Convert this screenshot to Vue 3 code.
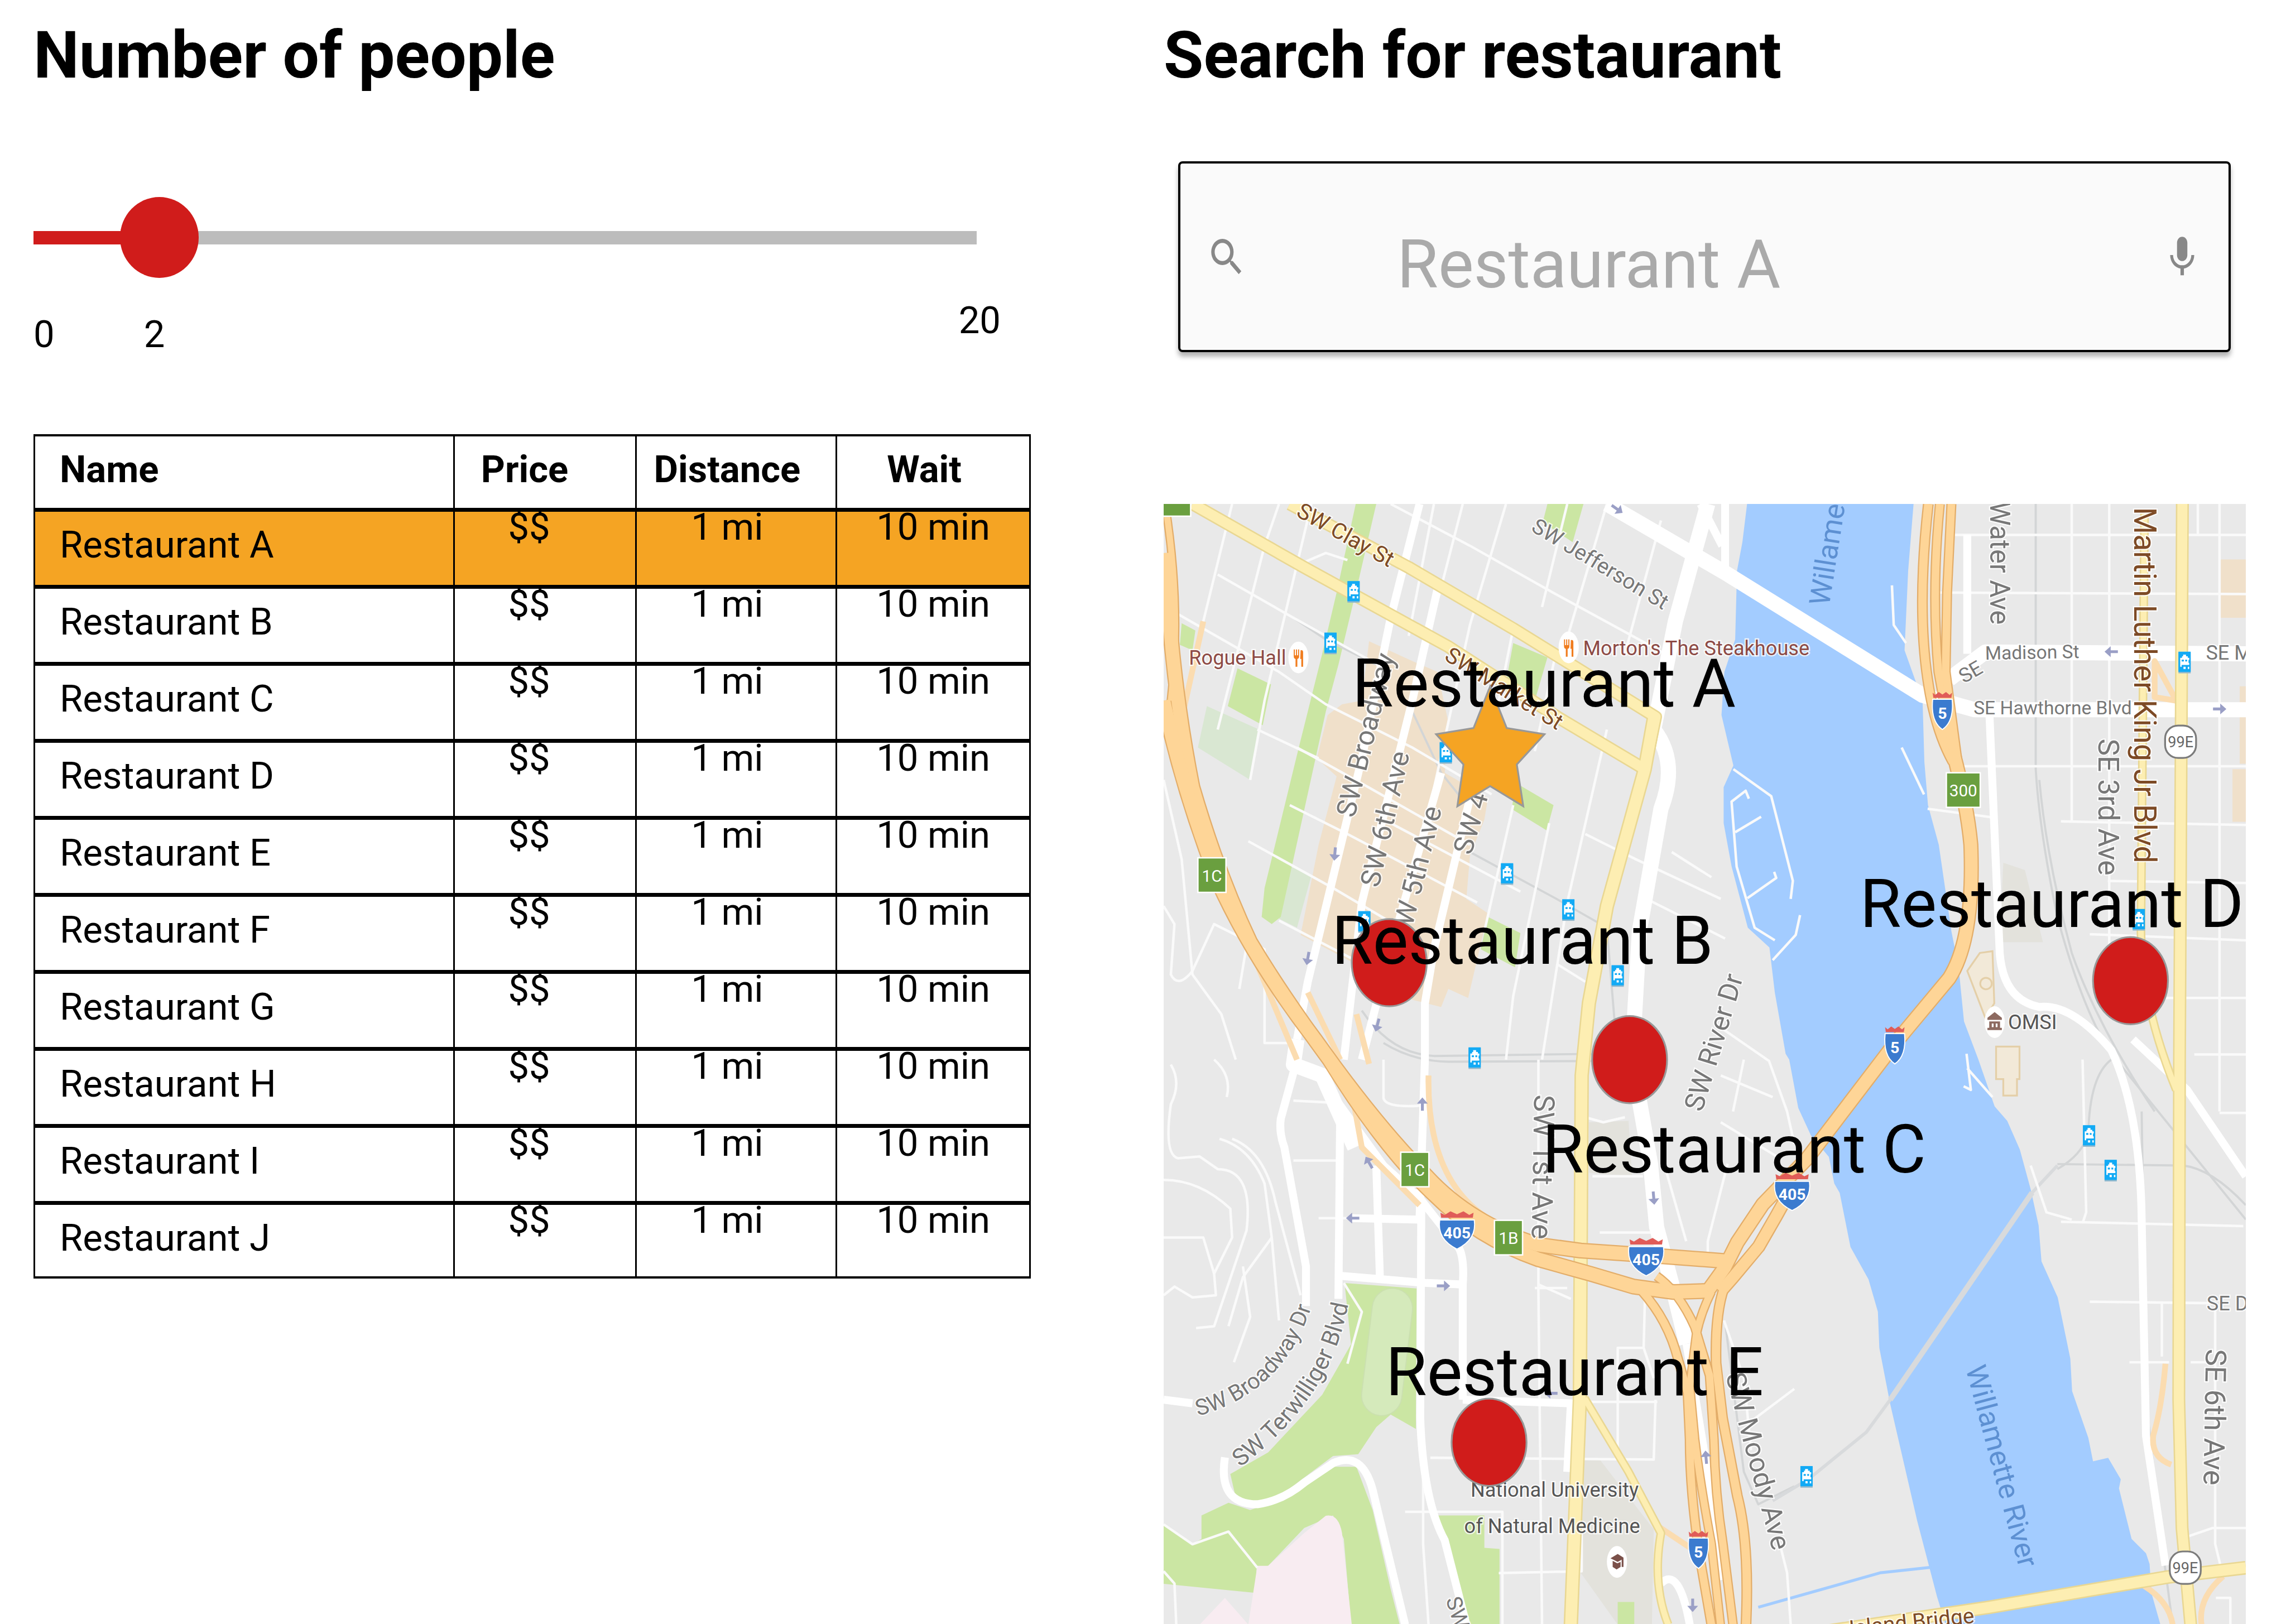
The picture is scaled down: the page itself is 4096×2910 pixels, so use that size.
<script setup>
import { ref } from 'vue'

const people = ref(2)
const query = ref('Restaurant A')

const restaurants = ['A', 'B', 'C', 'D', 'E', 'F', 'G', 'H', 'I', 'J'].map((letter) => ({
  name: `Restaurant ${letter}`,
  price: '$$',
  distance: '1 mi',
  wait: '10 min',
}))
const selected = 'Restaurant A'

// Map canvas: origin and extent of the drawing's coordinate system
const map = { x: 10, y: 14, w: 3003, h: 3110 }

const labels = [
  { text: 'Restaurant A', x: 533, y: 424 },
  { text: 'Restaurant B', x: 476, y: 1138 },
  { text: 'Restaurant C', x: 1061, y: 1717 },
  { text: 'Restaurant D', x: 1942, y: 1036 },
  { text: 'Restaurant E', x: 626, y: 2335 },
]
const place = (l) => ({
  left: `${((l.x - map.x) / map.w) * 100}%`,
  top: `${((l.y - map.y) / map.h) * 100}%`,
})

const dots = [[636, 1287], [1303, 1556], [2693, 1337], [913, 2618]]

const parks = [
  '543,14 600,14 550,230 495,460 460,590 335,1160 310,1180 282,1160 290,1080 385,690 450,430 490,260',
  '1075,14 1175,14 1145,120 1062,65',
  '980,400 1075,440 1040,560 960,510',
  '215,470 308,515 285,628 188,575',
  '60,345 98,365 90,420 55,405',
  '990,790 1092,850 1073,920 975,860',
  '910,1160 1000,1205 985,1300 890,1250',
  '512,2176 712,2191 710,2581 640,2541 600,2576 550,2651 480,2656 360,2746 290,2791 210,2771 195,2706 300,2646 450,2486 530,2346',
  '115,2821 190,2786 250,2806 340,2776 480,2686 545,2686 590,2806 640,3026 665,3124 530,3124 510,2886 480,2821 400,2856 300,2961 268,2966 265,3036 10,3011 10,2846 90,2901 115,2886',
  '770,2821 900,2821 900,2911 942,2914 942,3124 855,3124',
  '1270,3061 1316,3061 1316,3124 1270,3124',
]
const paleParks = ['130,575 275,640 250,780 105,690', '360,1020 420,1045 380,1190 330,1165']
const beige = [
  '505,570 560,560 580,395 700,450 770,480 800,620 790,760 910,830 900,890 860,990 850,1110 910,1150 855,1385 800,1360 780,1410 700,1390 560,1300 390,1210 440,960 490,770 435,720 465,600',
  '2940,168 3013,168 3013,330 2940,330',
  '2996,520 3013,520 3013,735 2996,735',
  '2976,750 3013,750 3013,896 2976,896',
]
const river =
  '1629,14 1616,120 1601,200 1596,390 1566,480 1558,600 1591,740 1564,800 1564,900 1586,1020 1631,1190 1691,1245 1706,1370 1736,1540 1746,1556 1771,1690 1806,1766 1856,1826 1871,1900 1886,1926 1916,2076 1966,2166 1992,2256 1996,2356 2026,2511 2101,2836 2156,3046 2180,3124 2776,3124 2751,3036 2746,2956 2736,2926 2696,2886 2661,2746 2666,2721 2631,2661 2589,2671 2576,2606 2531,2476 2526,2386 2491,2216 2446,2116 2438,2016 2416,1916 2386,1806 2351,1726 2316,1686 2271,1556 2231,1450 2216,1300 2196,1200 2161,960 2131,850 2121,730 2116,560 2066,420 2076,200 2091,14'

const minor = [
  // west side blocks
  'M200 14L120 340L60 600', 'M330 14L290 130L160 640M420 14L290 560L250 780', 'M160 210L370 330L640 480M50 320L330 480L460 570L700 690L920 820',
  'M270 640L440 720M640 14L860 130L1090 260L1420 440', 'M300 130L390 180L460 150L520 170', 'M840 14L740 400M960 14L860 350L800 620L700 1080',
  'M1130 14L1060 300M1240 14L1120 420M1390 60L1290 430', 'M980 360L900 760M1100 420L1040 700M1240 640L1130 1120L1060 1556', 'M380 690L560 790L860 960',
  'M360 850L520 930L880 1120M245 950L480 1080L700 1210', 'M640 900L1000 1090', 'M1080 900L980 1380L960 1556M980 850L900 1200', 'M330 1170L560 1290',
  'M10 780L60 1000L90 1320L170 1430L210 1556', 'M10 1130L40 1180L30 1320Q50 1360 90 1310L150 1180L290 1250L290 1510L380 1510M240 1240L220 1360',
  'M1180 930L1320 1000L1556 1110M1420 980L1530 1050M1100 1290L1180 1340', 'M1350 1110L1568 1220', 'M760 14L690 380',
  'M1050 1556L1050 2200L1060 3124', 'M1180 1716L1230 1730L1290 1716', 'M1220 2036L1370 2036M1200 1880L1340 1880', 'M1050 2180L1140 2220M1040 2190L1130 2190',
  'M750 2661L1370 2666L1375 2500M940 2506L1380 2506M680 2811L950 2811L950 3124', 'M940 2981L1170 2976L1170 2850', 'M1346 2200L1342 2356L1270 2356L1270 2660M1342 2356L1370 2440',
  'M730 2580L730 2900L745 3124', 'M1575 1845L1520 2060L1520 2090', 'M1460 2060L1400 1850',
  // south-west hills
  'M30 1570Q60 1620 30 1680Q10 1820 50 1830L110 1825L160 1860Q260 1860 240 2030L150 2296L100 2301', 'M10 1890Q110 1890 195 1970L200 2050L150 2150L155 2210L90 2216L40 2186L10 2210',
  'M10 2050L120 2050L150 2150M165 1776Q250 1800 290 1900L310 2050L230 2160L190 2296', 'M200 1776Q290 1810 320 1950L390 2210', 'M310 2050L330 2280M230 2130L250 2270L205 2396', 'M150 1556Q200 1600 185 1660',
  'M370 1670L490 1676M370 1836L490 1836M440 1996L720 1996', 'M10 2846L90 2901L190 2866L270 2966', 'M10 2976L40 3010L45 3124',
  'M620 1556L620 1660Q620 1690 720 1684', 'M510 2176L560 2256L520 2400',
  // east side
  'M2200 100L3013 100M2150 260L3013 264M2200 742L3013 742M2500 895L3013 905M2630 1060L3013 1066M2580 1208L3013 1225M2660 1385L3013 1385M2870 1542L3013 1542',
  'M2530 14L2530 895M2634 14L2634 1300M2940 14L2940 1700M2880 14L2880 100', 'M2560 1556L2570 1980L2560 2010M2500 2006L3006 2018M2580 2228L2920 2232M2690 2396L2800 2396M2928 2250L2928 2900L2945 2970M2860 2396L2930 2396',
  'M2940 1704L3013 1704', 'M2780 2230L2780 2380M2850 2880L2920 2856L3013 2856M2930 3050L2970 3050L2970 3124', 'M2130 860L2320 885',
  'M1620 1556L1590 1700M1556 1600L1700 1660M1640 2560L1760 2470',
  'M1560 1470L1690 1560L1740 1700L1760 1790', 'M1556 1730L1720 1830', 'M2416 1850L2460 1980L2530 2000', 'M1750 3124L1740 2980L1720 2900', 'M1565 2280L1620 2440L1640 2640',
  // marina
  'M1591 750L1696 825L1756 1060L1750 1110', 'M1634 832L1625 810L1586 840L1600 1020L1650 1190L1706 1225', 'M1596 925L1668 882', 'M1630 1108L1710 1052L1704 1035', 'M1776 1155L1764 1210L1700 1280', 'M2031 240L2036 350L2070 400', 'M2058 690L2120 820',
  'M2238 1540L2250 1640L2230 1630M2240 1580L2310 1660',
]
const medium = [
  'M720 14L640 330L560 720L410 1340L380 1500', 'M770 250L700 560L560 1120L510 1556', 'M860 830L760 1250L735 1400L735 1556L720 2000', 'M780 760L640 1250L560 1556',
  'M380 1556L335 1720Q330 1760 345 1800L405 2130L405 2240', 'M440 1600L620 1850L720 1940L830 2080Q845 2110 840 2180L840 2500', 'M500 1680L495 2220', 'M600 1850L610 2160',
  'M500 2156L740 2176L840 2180', 'M725 1950L722 2550Q730 2780 790 2890L850 3124', 'M10 2500L90 2510', 'M530 1996L720 2000M840 2500L1140 2510L1130 2700',
  'M180 2660Q160 2790 270 2790Q340 2780 400 2730L480 2676Q560 2640 590 2750L680 3124', 'M2300 560L2330 1260Q2340 1390 2440 1410Q2530 1400 2640 1530Q2720 1700 2724 2000L2736 2600L2790 2960',
  'M2240 100L2240 430', 'M2700 1500L2850 1640L3013 1880', 'M1500 14L1560 130M1568 14L1568 200', 'M1390 3010Q1440 2960 1470 3124', 'M1461 2345L1514 2669L1560 3000',
]
const major = [
  'M1240 14L1568 205L2116 545L2260 585L3013 585', 'M2190 500L2290 425L3013 430', 'M1520 14L1430 340L1370 640Q1440 730 1390 860L1330 1200L1310 1556L1361 1845L1378 2021L1425 2198L1461 2345',
  'M380 1500L370 1570L450 1600L540 1800',
]
const rail = [
  'M2430 14L2430 750Q2440 920 2490 1160Q2560 1420 2640 1540L3013 2000', 'M2440 780Q2460 1000 2530 1260Q2600 1460 2760 1700', 'M2640 1556Q2580 1600 2576 1760Q2560 1820 2490 1860', 'M2490 1846L2840 1850Q2920 1860 3013 1960',
  'M700 590L780 760L860 860M860 980L1100 1110L1240 1190L1270 1556', 'M560 1420Q640 1540 760 1546L1200 1540M620 1510Q700 1560 800 1562L1200 1560', 'M2724 1700L2736 2500L2780 2900L2810 3124', 'M1570 2300L1620 2700L1660 2790L1760 2740', 'M370 330L460 390L600 460',
]
const yellow = [
  ['M360 14L690 190L980 360L1375 605L1345 750', 36], ['M90 14L400 190L800 410L1110 610L1345 750', 36],
  ['M1372 600L1345 750L1240 1130L1190 1400L1170 1600L1165 2500L1140 3124', 40], ['M1178 2496L1300 2700L1390 2870Q1365 3010 1410 3124', 24],
  ['M2732 40L2722 1200Q2722 1400 2820 1640', 24], ['M2837 14L2829 1556L2827 2500L2836 2856L2860 3124', 36], ['M1800 3150L2300 3076L2796 2992L3013 2966', 38],
]
const ramps = [
  'M120 340L60 610M380 1556L260 1270M410 1370L500 1556M580 1568L545 1430', 'M745 1600Q740 1880 900 1990', 'M540 1690L560 1800L720 1960', 'M2790 2400Q2780 2520 2756 2600Q2750 2660 2806 2680', 'M2760 450L2820 560L2760 550Z', 'M2730 3016Q2800 3060 2810 3124M2950 2990Q2880 3050 2890 3124', 'M1380 2850L1470 2910',
]
const highways = [
  ['M14 14Q60 300 30 560', 24], ['M14 150Q30 500 90 800Q160 1040 250 1230Q340 1380 470 1556Q620 1800 760 1930Q880 2050 1049 2110L1196 2151L1314 2186L1425 2201L1520 2198', 44],
  ['M10 560Q60 800 160 1060Q260 1280 430 1500Q600 1740 740 1880Q860 2010 1049 2070L1167 2086L1343 2098L1568 2115', 44],
  ['M1337 2198Q1410 2280 1437 2386L1464 2480L1470 2610Q1470 2760 1500 2950L1530 3124', 28], ['M1378 2157Q1440 2200 1484 2298L1525 2433L1537 2610Q1540 2760 1562 2900L1590 3124', 27],
  ['M1530 2200Q1500 2260 1488 2320L1470 2463L1484 2610Q1500 2740 1530 2900L1555 3124', 26],
  ['M1565 2190Q1540 2260 1543 2398L1561 2551L1602 2767Q1636 2900 1626 3124', 30],
  ['M1555 2200L1590 2160L1661 2075L1710 1990L1760 1900', 38], ['M1520 2198L1567 2133L1602 2063L1673 1957L1796 1830L2040 1510L2190 1330Q2260 1220 2250 960Q2240 850 2200 700L2170 560', 42],
  ['M2132 14Q2100 300 2130 500Q2150 640 2200 730', 30], ['M2164 14Q2140 260 2160 480L2200 700', 28], ['M2196 14L2184 260L2180 480L2220 780', 28],
]

const stops = [[537, 256], [473, 399], [793, 703], [963, 1039], [1133, 1139], [567, 1172], [1270, 1322], [873, 1550], [2843, 452], [2716, 1166], [2578, 1766], [2638, 1862], [1794, 2712]]
const shields = [['5', 2171, 588, 1], ['5', 2039, 1516, 1], ['5', 1494, 2916, 1], ['405', 824, 2029, 2], ['405', 1349, 2103, 2], ['405', 1754, 1922, 2]]
const exits = [['', 46, 0, 78], ['1C', 144, 1044, 78], ['300', 2229, 808, 94], ['1C', 707, 1861, 78], ['1B', 967, 2050, 78]]
const routes = [[2832, 674], [2845, 2966]]
const arrows = [[485, 985, 95], [410, 1275, 100], [603, 1460, 105], [728, 1680, -90], [580, 1842, -120], [535, 1996, 180], [786, 2184, 0], [1370, 1940, 85], [1085, 2482, 180], [1515, 2660, -95], [1478, 3070, 90], [2640, 424, 180], [2940, 583, 0], [1268, 28, 35]]

const streets = [
  ['SW Clay St', 515, 100, 29, 62, 'brown'], ['SW Market St', 955, 526, 32, 62, 'brown'], ['SW Jefferson St', 1222, 180, 31, 60, ''],
  ["Morton's The Steakhouse", 1488, 414, 0, 56, 'place'], ['Rogue Hall', 215, 440, 0, 56, 'place'],
  ['SW Broadway', 570, 655, -76, 76, ''], ['SW 6th Ave', 624, 888, -77, 76, ''], ['SW 5th Ave', 710, 1040, -76, 76, ''], ['SW 4', 862, 900, -74, 76, ''],
  ['SW River Dr', 1536, 1508, -73, 76, ''], ['SW 1st Ave', 1062, 1854, 91, 80, ''], ['National University', 1095, 2750, 0, 56, 'dark'], ['of Natural Medicine', 1088, 2850, 0, 56, 'dark'],
  ['OMSI', 2421, 1452, 0, 56, 'dark'], ['Willame', 1852, 154, -81, 80, 'water'], ['Willamette River', 2336, 2684, 75, 80, 'water'],
  ['Water Ave', 2330, 178, 90, 76, ''], ['Martin Luther King Jr Blvd', 2732, 517, 90, 86, 'brown'], ['SE 3rd Ave', 2631, 855, 90, 80, ''],
  ['SE', 2249, 480, -30, 56, ''], ['Madison St', 2420, 426, -1, 52, ''], ['SE Hawthorne Blvd', 2477, 580, 0, 52, ''], ['SE M', 2966, 426, 0, 56, ''], ['SE D', 2962, 2232, 0, 56, ''],
  ['SE 6th Ave', 2926, 2548, 91, 80, ''], ['SW Moody Ave', 1660, 2670, 75, 76, ''], ['Ross Island Bridge', 2012, 3124, -6, 60, 'brown'], ['SW', 826, 3090, 72, 60, ''],
]
</script>

<template>
  <main class="page">
    <section class="column">
      <h1 class="title"><label for="people">Number of people</label></h1>
      <input
        id="people"
        v-model="people"
        class="slider"
        type="range"
        min="0"
        max="20"
        :style="{ '--fill': (people / 20) * 100 + '%' }"
      />
      <div class="scale">
        <span class="scale-low">0</span>
        <output class="scale-value" for="people">{{ people }}</output>
        <span class="scale-high">20</span>
      </div>

      <table class="list">
        <colgroup>
          <col class="col-name" />
          <col class="col-price" />
          <col class="col-distance" />
          <col class="col-wait" />
        </colgroup>
        <thead>
          <tr>
            <th class="name" scope="col">Name</th>
            <th class="price" scope="col">Price</th>
            <th class="distance" scope="col">Distance</th>
            <th class="wait" scope="col">Wait</th>
          </tr>
        </thead>
        <tbody>
          <tr v-for="r in restaurants" :key="r.name" :class="{ selected: r.name === selected }">
            <td class="name">{{ r.name }}</td>
            <td class="price">{{ r.price }}</td>
            <td class="distance">{{ r.distance }}</td>
            <td class="wait">{{ r.wait }}</td>
          </tr>
        </tbody>
      </table>
    </section>

    <section class="column">
      <h1 class="title"><label for="search">Search for restaurant</label></h1>
      <div class="search">
        <svg class="icon" viewBox="0 0 24 24" preserveAspectRatio="none" aria-hidden="true">
          <path d="M15.5 14h-.79l-.28-.27A6.47 6.47 0 0 0 16 9.5 6.5 6.5 0 1 0 9.5 16c1.61 0 3.09-.59 4.23-1.57l.27.28v.79l5 4.99L20.49 19l-4.99-5zm-6 0C7.01 14 5 11.99 5 9.5S7.01 5 9.5 5 14 7.01 14 9.5 11.99 14 9.5 14z" />
        </svg>
        <input id="search" v-model="query" class="query" type="text" />
        <button class="mic" type="button" aria-label="Voice search">
          <svg class="icon" viewBox="0 0 24 24" preserveAspectRatio="none" aria-hidden="true">
            <path d="M12 14c1.66 0 2.99-1.34 2.99-3L15 5c0-1.66-1.34-3-3-3S9 3.34 9 5v6c0 1.66 1.34 3 3 3zm5.3-3c0 3-2.54 5.1-5.3 5.1S6.7 14 6.7 11H5c0 3.41 2.72 6.23 6 6.72V21h2v-3.28c3.28-.48 6-3.3 6-6.72h-1.7z" />
          </svg>
        </button>
      </div>

      <div class="map">
        <svg class="map-art" :viewBox="`${map.x} ${map.y} ${map.w} ${map.h}`">
          <rect :x="map.x" :y="map.y" :width="map.w" :height="map.h" fill="#e9e9e9" />
          <polygon v-for="p in beige" :key="p" :points="p" fill="#f0e0ca" />
          <polygon points="1170,2666 1220,2666 1370,2860 1365,3124 1270,3124 1168,2981" fill="#e3e2dc" />
          <polygon points="1190,1730 1300,1726 1310,1880 1190,1870" fill="#e3e2dc" />
          <polygon points="2340,1010 2400,1030 2450,1230 2330,1230" fill="#e3e2dc" />
          <polygon v-for="p in paleParks" :key="p" :points="p" fill="#d9e7d2" />
          <polygon v-for="p in parks" :key="p" :points="p" fill="#cbe6a3" />
          <path d="M300 2961L400 2870L460 2822Q495 2815 505 2870L532 3124H110L180 3050L245 3124L270 2961Z" fill="#f8ecf1" />
          <rect x="574" y="2190" width="112" height="355" rx="56" transform="rotate(7 630 2367)" fill="#d5eabb" stroke="#cbe0b0" stroke-width="3" />
          <polygon :points="river" fill="#a3ccff" />
          <path d="M1660 3076L2000 2980L2140 2965" class="line" stroke="#a3ccff" stroke-width="8" />
          <g class="museum" stroke="#e4cfa8" stroke-width="5" fill="#f2e9d8">
            <path d="M2275 1260L2310 1255L2315 1400L2290 1440L2240 1310Z" />
            <path d="M2320 1520H2385V1610H2378V1656H2340V1610H2320Z" />
            <circle cx="2292" cy="1345" r="16" />
          </g>
          <path v-for="d in rail" :key="d" :d="d" class="line" stroke="#d3d5d6" stroke-width="6" />
          <path d="M2026 2500L2420 1925" class="line" stroke="#d8dadc" stroke-width="15" />
          <path d="M1700 2780L1800 2720L1960 2590L2026 2500M2420 1925L2490 1850" class="line" stroke="#d8dadc" stroke-width="9" />
          <path v-for="d in minor" :key="d" :d="d" class="line" stroke="#fafafa" stroke-width="7" />
          <path v-for="d in medium" :key="d" :d="d" class="line" stroke="#fff" stroke-width="22" />
          <path v-for="d in major" :key="d" :d="d" class="line" stroke="#fff" stroke-width="42" />
          <path v-for="d in ramps" :key="d" :d="d" class="line" stroke="#fbdcb0" stroke-width="16" />
          <path v-for="[d, w] in yellow" :key="d" :d="d" class="line" stroke="#e9d792" :stroke-width="w" />
          <path v-for="[d, w] in yellow" :key="d" :d="d" class="line" stroke="#fdeeb2" :stroke-width="w - 8" />
          <path v-for="[d, w] in highways" :key="d" :d="d" class="line" stroke="#e3ad69" :stroke-width="w" />
          <path v-for="[d, w] in highways" :key="d" :d="d" class="line" stroke="#fed597" :stroke-width="w - 7" />

          <g v-for="[x, y, a] in arrows" :key="x + '-' + y" :transform="`translate(${x} ${y}) rotate(${a})`">
            <path d="M-18 -4H2V-15L19 0L2 15V4H-18Z" fill="#9a9fc6" />
          </g>

          <text
            v-for="[t, x, y, a, s, c] in streets"
            :key="t + x"
            class="street"
            :class="c"
            :font-size="s"
            :transform="`translate(${x} ${y}) rotate(${a})`"
          >{{ t }}</text>
          <path id="broadway-dr" d="M105 2545Q350 2480 425 2226" fill="none" />
          <path id="terwilliger" d="M222 2688Q500 2480 530 2180" fill="none" />
          <text class="street along" font-size="62"><textPath href="#broadway-dr">SW Broadway Dr</textPath></text>
          <text class="street along" font-size="66"><textPath href="#terwilliger">SW Terwilliger Blvd</textPath></text>

          <g v-for="[x, y] in stops" :key="'s' + x" :transform="`translate(${x} ${y})`">
            <rect x="-17" y="-26" width="34" height="58" fill="#8fb7cc" />
            <rect x="-17" y="-28" width="34" height="56" fill="#12aaf5" />
            <path d="M-4 -20H4V-15H9V-11H13V-5H11V3H13V9H-8V14H-12V-11H-7V-15H-4Z" fill="#fff" />
            <path d="M-8 -6H-2V-1H-8ZM2 -6H7V-1H2Z" fill="#12aaf5" />
            <path d="M-3 14H3V20H-3ZM9 14H13V20H9Z" fill="#fff" />
          </g>

          <g v-for="[t, x, y, k] in shields" :key="'i' + x" :transform="`translate(${x} ${y})`">
            <path v-if="k === 1" d="M-27 -50L-20 -44L-10 -52L0 -45L10 -52L20 -44L27 -50L25 -36H-25Z" fill="#e05c58" />
            <path v-if="k === 1" d="M-27 -32H27Q33 30 0 52Q-33 30 -27 -32Z" fill="#3b7bcf" stroke="#fff" stroke-width="3" />
            <path v-if="k === 2" d="M-46 -48L-34 -42L-18 -52L0 -44L18 -52L34 -42L46 -48L44 -34H-44Z" fill="#e05c58" />
            <path v-if="k === 2" d="M-48 -28H48Q56 26 0 53Q-56 26 -48 -28Z" fill="#3b7bcf" stroke="#fff" stroke-width="3" />
            <text class="sign bold" y="8" font-size="44">{{ t }}</text>
          </g>
          <g v-for="[t, x, y, w] in exits" :key="'e' + x" :transform="`translate(${x} ${y})`">
            <rect :x="-w / 2" y="-48" :width="w" height="96" fill="#6a9f3f" stroke="#fff" stroke-width="4" />
            <text class="sign" y="2" font-size="46">{{ t }}</text>
          </g>
          <g v-for="[x, y] in routes" :key="'r' + x" :transform="`translate(${x} ${y})`">
            <rect x="-43" y="-45" width="86" height="90" rx="36" fill="#fff" stroke="#7b7b7b" stroke-width="5" />
            <text class="route" y="2" font-size="42">99E</text>
          </g>

          <g transform="translate(384 440)">
            <ellipse rx="28" ry="44" fill="#fff" />
            <path d="M-13 -22V-4Q-13 4 -8 4V26H-3V4Q2 4 2 -4V-22H-1V-6H-4V-22H-7V-6H-10V-22ZM6 -20Q13 -22 13 -14V26H8V4H5Z" fill="#f07d1f" />
          </g>
          <g transform="translate(1134 412)">
            <ellipse rx="28" ry="44" fill="#fff" />
            <path d="M-13 -22V-4Q-13 4 -8 4V26H-3V4Q2 4 2 -4V-22H-1V-6H-4V-22H-7V-6H-10V-22ZM6 -20Q13 -22 13 -14V26H8V4H5Z" fill="#f07d1f" />
          </g>
          <g transform="translate(2316 1452)">
            <ellipse rx="28" ry="44" fill="#fff" />
            <path d="M0 -28L20 -12V-6H-20V-12ZM-15 -2H15V16H20V22H-20V16H-15ZM-8 4V14H-3V4ZM3 4V14H8V4Z" fill="#8d6a60" fill-rule="evenodd" />
          </g>
          <g transform="translate(1268 2950)">
            <ellipse rx="28" ry="44" fill="#fff" />
            <path d="M-18 -10L2 -22L18 -12V14H13V-6L2 0ZM-12 -3L1 4L10 0V14L-1 21L-12 14Z" fill="#7a5049" />
          </g>

          <polygon
            points="916,520 962,636 1067,653 990,737 1008,853 916,797 825,853 842,737 766,653 870,636"
            fill="#f5a423"
            stroke="#989898"
            stroke-width="5"
          />
          <ellipse v-for="[x, y] in dots" :key="'d' + x" :cx="x" :cy="y" rx="104" ry="121" fill="#d01c1b" stroke="#989898" stroke-width="5" />
        </svg>
        <span v-for="l in labels" :key="l.text" class="pin-label" :style="place(l)">{{ l.text }}</span>
      </div>
    </section>
  </main>
</template>

<style>
body {
  margin: 0;
  background: #fff;
}
</style>

<style scoped>
.page {
  box-sizing: border-box;
  display: grid;
  grid-template-columns: 1787fr 1939fr;
  column-gap: 238px;
  padding: 21px 72px 0 60px;
  font-family: Roboto, 'Liberation Sans', sans-serif;
  color: #000;
}
.column {
  min-width: 0;
}
.title {
  margin: 0;
  font-size: 116px;
  line-height: 156px;
  font-weight: 700;
  white-space: nowrap;
}

.slider {
  -webkit-appearance: none;
  appearance: none;
  display: block;
  width: calc(100% - 97px);
  height: 145px;
  margin: 176px 0 0;
  background: linear-gradient(to right, #d01c1b var(--fill), #bcbcbc var(--fill)) center / 100% 24px no-repeat;
}
.slider::-webkit-slider-thumb {
  -webkit-appearance: none;
  appearance: none;
  width: 141px;
  height: 145px;
  border-radius: 50%;
  background: #d01c1b;
}
.scale {
  display: flex;
  align-items: flex-start;
  margin: 36px 54px 0 0;
  font-size: 67px;
  line-height: 80px;
}
.scale-low,
.scale-value {
  padding-top: 25px;
}
.scale-value {
  margin-left: 160px;
}
.scale-high {
  margin-left: auto;
}

.list {
  width: 100%;
  margin-top: 139px;
  border: 4px solid #000;
  border-left-width: 3px;
  border-right-width: 3px;
  border-spacing: 0;
  table-layout: fixed;
  font-size: 67px;
}
.col-name {
  width: 42.2%;
}
.col-price {
  width: 18.3%;
}
.col-distance {
  width: 20.2%;
}
.list th,
.list td {
  box-sizing: border-box;
  height: 138px;
  padding: 0;
  border-bottom: 7px solid #000;
  border-right: 3px solid #000;
  text-align: center;
  vertical-align: top;
  line-height: 54px;
}
.list th {
  line-height: 118px;
  height: 135px;
}
.list .name {
  padding-left: 44px;
  text-align: left;
}
.list td.name {
  line-height: 118px;
}
.list .price {
  padding-right: 56px;
}
.list th.price {
  padding-right: 72px;
}
.list .distance {
  padding-right: 32px;
}
.list th.wait {
  padding-right: 32px;
}
.list .wait {
  border-right: 0;
}
.list tr:last-child td {
  height: 128px;
  border-bottom: 0;
}
.selected {
  background: #f5a423;
}

.search {
  box-sizing: border-box;
  display: flex;
  align-items: center;
  height: 342px;
  margin: 112px 27px 0 26px;
  padding: 0 46px;
  border: 4px solid #000;
  border-radius: 8px;
  background: #fafafa;
  box-shadow: 0 8px 8px rgba(0, 0, 0, 0.3);
}
.icon {
  display: block;
  flex: none;
  width: 74px;
  height: 87px;
  fill: #888;
}
.query {
  flex: 1;
  min-width: 0;
  height: 100%;
  box-sizing: border-box;
  margin: 0;
  padding: 28px 0 0 268px;
  border: 0;
  outline: 0;
  background: transparent;
  font: 120px Roboto, sans-serif;
  color: #aaa;
}
.mic {
  padding: 0;
  border: 0;
  background: none;
}

.map {
  position: relative;
  margin-top: 272px;
}
.map-art {
  display: block;
  width: 100%;
  height: auto;
}
.line {
  fill: none;
  stroke-linejoin: round;
}
.street {
  fill: #777;
  stroke: #fff;
  stroke-opacity: 0.8;
  stroke-width: 7px;
  paint-order: stroke;
  text-anchor: middle;
  dominant-baseline: central;
}
.street.along {
  text-anchor: start;
  dominant-baseline: auto;
}
.street.brown {
  fill: #7d4a25;
}
.street.place {
  fill: #8d4a45;
}
.street.dark {
  fill: #555;
}
.street.water {
  fill: #5d90d2;
  stroke: none;
}
.sign,
.route {
  fill: #fff;
  text-anchor: middle;
  dominant-baseline: central;
}
.sign.bold {
  font-weight: 700;
}
.route {
  fill: #666;
}
.pin-label {
  position: absolute;
  font-size: 120px;
  line-height: 114px;
  white-space: nowrap;
}
</style>
